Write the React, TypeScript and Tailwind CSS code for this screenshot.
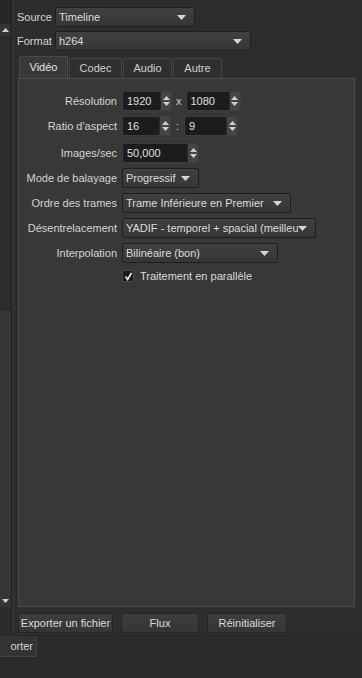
function Arrow() {
  return (
    <svg width="9" height="5" viewBox="0 0 9 5" className="shrink-0">
      <path d="M0 0 H9 L4.5 5 Z" fill="#d6d6d6" />
    </svg>
  );
}

function Combo({ text, w }: { text: string; w: string }) {
  return (
    <div
      className={`${w} h-[20px] flex items-center justify-between pl-[3px] pr-[8px] rounded-[2px] border border-[#1e1e1e] bg-gradient-to-b from-[#404040] to-[#363636] text-[#dcdcdc] overflow-hidden whitespace-nowrap`}
    >
      <span className="overflow-hidden">{text}</span>
      <Arrow />
    </div>
  );
}

function Spin({ value, w }: { value: string; w: string }) {
  return (
    <div className={`${w} h-[20px] flex rounded-[2px] border border-[#3e3e3e] bg-[#1c1c1c] overflow-hidden`}>
      <div className="flex-1 flex items-center pl-[4px] text-[#e0e0e0]">{value}</div>
      <div className="w-[11px] flex flex-col items-center justify-center gap-[2px] bg-[#454545] border-l border-[#2a2a2a]">
        <svg width="7" height="4" viewBox="0 0 7 4">
          <path d="M0 4 L3.5 0 L7 4 Z" fill="#d0d0d0" />
        </svg>
        <svg width="7" height="4" viewBox="0 0 7 4">
          <path d="M0 0 H7 L3.5 4 Z" fill="#d0d0d0" />
        </svg>
      </div>
    </div>
  );
}

function Row({ label, children, mt }: { label: string; children: React.ReactNode; mt: string }) {
  return (
    <div className={`flex items-center ${mt}`}>
      <div className="w-[98px] text-right text-[#d4d4d4] whitespace-nowrap">{label}</div>
      <div className="ml-[5px] flex items-center">{children}</div>
    </div>
  );
}

export default function App() {
  const tabs = [
    { name: "Vidéo", w: "w-[49px]" },
    { name: "Codec", w: "w-[53px]" },
    { name: "Audio", w: "w-[49px]" },
    { name: "Autre", w: "w-[49px]" },
  ];

  return (
    <div
      className="w-[362px] h-[678px] bg-[#2d2d2d] text-[11px] text-[#d4d4d4] flex flex-col overflow-hidden"
      style={{ fontFamily: '"Liberation Sans", Arial, sans-serif' }}
    >
      <div className="h-[636px] flex border-b border-[#262626]">
        {/* left scroller strip */}
        <div className="w-[12px] flex flex-col border-r border-[#1f1f1f] bg-[#2b2b2b]">
          <div className="h-[24px] bg-[#272727]" />
          <div className="h-[12px] flex items-center justify-center bg-[#343434]">
            <svg width="7" height="4" viewBox="0 0 7 4">
              <path d="M0 4 L3.5 0 L7 4 Z" fill="#d0d0d0" />
            </svg>
          </div>
          <div className="h-[273px] bg-[#2c2c2c]" />
          <div className="flex-1 bg-[#363636] border-t border-[#222]" />
          <div className="h-[12px] flex items-center justify-center bg-[#343434]">
            <svg width="7" height="4" viewBox="0 0 7 4">
              <path d="M0 0 H7 L3.5 4 Z" fill="#d0d0d0" />
            </svg>
          </div>
          <div className="h-[28px]" />
        </div>
        <div className="w-[2px] bg-[#333]" />

        {/* main */}
        <div className="flex-1 flex flex-col pl-[3px]">
          <div className="flex items-center mt-[7px]">
            <span className="w-[38px] text-[#d4d4d4]">Source</span>
            <Combo text="Timeline" w="w-[140px]" />
          </div>
          <div className="flex items-center mt-[4px]">
            <span className="w-[38px] text-[#d4d4d4]">Format</span>
            <Combo text="h264" w="w-[196px]" />
          </div>

          {/* tabs */}
          <div className="flex mt-[6px] ml-[2px] h-[21px] items-end">
            {tabs.map((t, i) => (
              <div
                key={t.name}
                className={`${t.w} mr-[1px] flex items-center justify-center rounded-t-[2px] border border-b-0 ${
                  i === 0
                    ? "h-[22px] bg-[#393939] border-[#4a4a4a] text-[#e6e6e6]"
                    : "h-[20px] bg-[#2f2f2f] border-[#444] text-[#cfcfcf]"
                }`}
              >
                {t.name}
              </div>
            ))}
          </div>

          {/* panel */}
          <div className="ml-[1px] w-[337px] h-[529px] bg-[#383838] border border-[#4c4c4c] flex flex-col">
            <Row label="Résolution" mt="mt-[12px]">
              <Spin value="1920" w="w-[50px]" />
              <span className="mx-[4px] text-[#cfcfcf]">x</span>
              <Spin value="1080" w="w-[55px]" />
            </Row>
            <Row label="Ratio d'aspect" mt="mt-[5px]">
              <Spin value="16" w="w-[49px]" />
              <span className="mx-[5px] text-[#cfcfcf]">:</span>
              <Spin value="9" w="w-[54px]" />
            </Row>
            <Row label="Images/sec" mt="mt-[7px]">
              <Spin value="50,000" w="w-[77px]" />
            </Row>
            <Row label="Mode de balayage" mt="mt-[5px]">
              <Combo text="Progressif" w="w-[77px]" />
            </Row>
            <Row label="Ordre des trames" mt="mt-[5px]">
              <Combo text="Trame Inférieure en Premier" w="w-[169px]" />
            </Row>
            <Row label="Désentrelacement" mt="mt-[5px]">
              <Combo text="YADIF - temporel + spacial (meilleu" w="w-[194px]" />
            </Row>
            <Row label="Interpolation" mt="mt-[5px]">
              <Combo text="Bilinéaire (bon)" w="w-[156px]" />
            </Row>
            <div className="flex items-center mt-[5px] ml-[103px]">
              <div className="w-[12px] h-[12px] bg-[#1a1a1a] border border-[#4a4a4a] flex items-center justify-center">
                <svg width="9" height="9" viewBox="0 0 9 9">
                  <path d="M1.5 4.5 L3.6 7.5 L7.5 1" stroke="#f0f0f0" strokeWidth="1.6" fill="none" />
                </svg>
              </div>
              <span className="ml-[6px] text-[#d8d8d8]">Traitement en parallèle</span>
            </div>
          </div>

          {/* buttons */}
          <div className="flex mt-[6px] ml-[1px] gap-[8px]">
            <div className="w-[95px] h-[20px] flex items-center justify-center rounded-[2px] border border-[#242424] bg-gradient-to-b from-[#3e3e3e] to-[#353535] text-[#dcdcdc] whitespace-nowrap">
              Exporter un fichier
            </div>
            <div className="w-[78px] h-[20px] flex items-center justify-center rounded-[2px] border border-[#242424] bg-gradient-to-b from-[#3e3e3e] to-[#353535] text-[#dcdcdc]">
              Flux
            </div>
            <div className="w-[80px] h-[20px] flex items-center justify-center rounded-[2px] border border-[#242424] bg-gradient-to-b from-[#3e3e3e] to-[#353535] text-[#dcdcdc]">
              Réinitialiser
            </div>
          </div>
        </div>
      </div>

      {/* bottom tab strip */}
      <div className="flex-1 bg-[#2b2b2b]">
        <div className="w-[37px] h-[21px] flex items-center justify-end pr-[3px] bg-[#333] border-r border-b border-[#444] rounded-br-[2px] overflow-hidden whitespace-nowrap text-[#d4d4d4]">
          orter
        </div>
      </div>
    </div>
  );
}
